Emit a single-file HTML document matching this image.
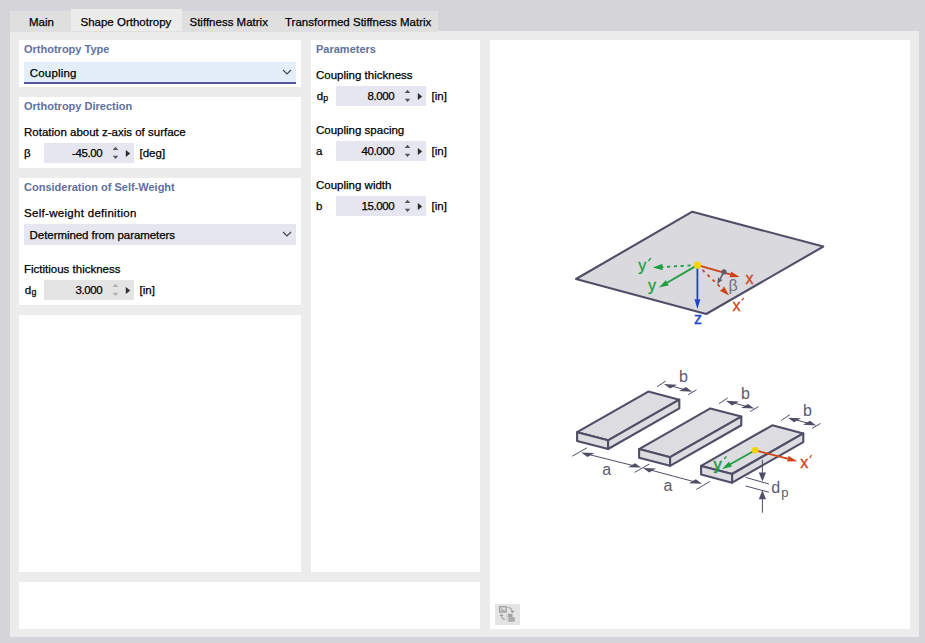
<!DOCTYPE html><html><head><meta charset="utf-8"><style>
html,body{margin:0;padding:0;}
body{width:925px;height:643px;position:relative;overflow:hidden;background:#d5d4d9;font-family:'Liberation Sans',sans-serif;}
div{box-sizing:border-box;}
.t{-webkit-text-stroke:0.25px currentColor;}
.h{-webkit-text-stroke:0.5px currentColor;}
</style></head><body>
<div style="position:absolute;left:10px;top:31px;width:909px;height:606px;background:#ececec;"></div>
<div style="position:absolute;left:10px;top:11px;width:428px;height:21px;background:#dfdfdf;"></div>
<div style="position:absolute;left:71px;top:9px;width:111px;height:22px;background:#ececec;"></div>
<div class="t" style="position:absolute;left:29px;top:14.02px;line-height:16px;font-size:11.5px;font-weight:normal;color:#000000;white-space:pre;">Main</div>
<div class="t" style="position:absolute;left:80.5px;top:14.02px;line-height:16px;font-size:11.5px;font-weight:normal;color:#000000;white-space:pre;">Shape Orthotropy</div>
<div class="t" style="position:absolute;left:189.5px;top:14.02px;line-height:16px;font-size:11.5px;font-weight:normal;color:#000000;white-space:pre;">Stiffness Matrix</div>
<div class="t" style="position:absolute;left:285px;top:14.02px;line-height:16px;font-size:11.5px;font-weight:normal;color:#000000;white-space:pre;">Transformed Stiffness Matrix</div>
<div style="position:absolute;left:19px;top:40px;width:282px;height:47px;background:#ffffff;"></div>
<div style="position:absolute;left:19px;top:97px;width:282px;height:71px;background:#ffffff;"></div>
<div style="position:absolute;left:19px;top:178px;width:282px;height:127px;background:#ffffff;"></div>
<div style="position:absolute;left:19px;top:315px;width:282px;height:257px;background:#ffffff;"></div>
<div style="position:absolute;left:311px;top:40px;width:169px;height:532px;background:#ffffff;"></div>
<div style="position:absolute;left:19px;top:582px;width:461px;height:47px;background:#ffffff;"></div>
<div style="position:absolute;left:490px;top:40px;width:420px;height:589px;background:#ffffff;"></div>
<div style="position:absolute;left:24px;top:41.19px;line-height:16px;font-size:11px;font-weight:bold;color:#6070a0;white-space:pre;">Orthotropy Type</div>
<div style="position:absolute;left:24px;top:62px;width:272px;height:20px;background:#e3eef9;"></div>
<div style="position:absolute;left:24px;top:82px;width:272px;height:2px;background:#5656a0;"></div>
<div class="t" style="position:absolute;left:29.8px;top:65.02px;line-height:16px;font-size:11.5px;font-weight:normal;color:#000000;white-space:pre;letter-spacing:0.18px;">Coupling</div>
<svg style="position:absolute;left:282px;top:69px" width="10" height="6" viewBox="0 0 10 6"><path d="M1 1 L5 5 L9 1" fill="none" stroke="#404040" stroke-width="1.1"/></svg>
<div style="position:absolute;left:24px;top:98.19px;line-height:16px;font-size:11px;font-weight:bold;color:#6070a0;white-space:pre;">Orthotropy Direction</div>
<div class="t" style="position:absolute;left:24px;top:124.02px;line-height:16px;font-size:11.5px;font-weight:normal;color:#000000;white-space:pre;">Rotation about z-axis of surface</div>
<div class="t" style="position:absolute;left:24px;top:145.02px;line-height:16px;font-size:11.5px;font-weight:normal;color:#000000;white-space:pre;">β</div>
<div style="position:absolute;left:44px;top:143px;width:90px;height:20px;background:#e6e6f0;"></div>
<div class="t" style="position:absolute;right:822.8px;top:145.22px;line-height:16px;font-size:11.5px;font-weight:normal;color:#000000;white-space:pre;letter-spacing:-0.42px;">-45.00</div>
<svg style="position:absolute;left:104px;top:143px" width="30" height="20" viewBox="0 0 30 20"><path d="M8.7 7 L11.5 3.8 L14.3 7 Z" fill="#555555"/><path d="M8.7 12.8 L11.5 16 L14.3 12.8 Z" fill="#555555"/><path d="M21.8 7 L26.2 10.5 L21.8 14 Z" fill="#2e2e2e"/></svg>
<div class="t" style="position:absolute;left:139.5px;top:145.22px;line-height:16px;font-size:11.5px;font-weight:normal;color:#000000;white-space:pre;">[deg]</div>
<div style="position:absolute;left:24px;top:179.19px;line-height:16px;font-size:11px;font-weight:bold;color:#6070a0;white-space:pre;">Consideration of Self-Weight</div>
<div class="t" style="position:absolute;left:24px;top:205.02px;line-height:16px;font-size:11.5px;font-weight:normal;color:#000000;white-space:pre;letter-spacing:0.3px;">Self-weight definition</div>
<div style="position:absolute;left:24px;top:224px;width:272px;height:21px;background:#e6e6f0;"></div>
<div class="t" style="position:absolute;left:29.6px;top:227.02px;line-height:16px;font-size:11.5px;font-weight:normal;color:#000000;white-space:pre;letter-spacing:-0.06px;">Determined from parameters</div>
<svg style="position:absolute;left:282px;top:231px" width="10" height="6" viewBox="0 0 10 6"><path d="M1 1 L5 5 L9 1" fill="none" stroke="#404040" stroke-width="1.1"/></svg>
<div class="t" style="position:absolute;left:24px;top:261.02px;line-height:16px;font-size:11.5px;font-weight:normal;color:#000000;white-space:pre;">Fictitious thickness</div>
<div class="t" style="position:absolute;left:24.8px;top:282.02px;line-height:16px;font-size:11.5px;font-weight:normal;color:#000000;white-space:pre;">d</div>
<div class="t" style="position:absolute;left:31.6px;top:284.25px;line-height:16px;font-size:8.8px;font-weight:normal;color:#000000;white-space:pre;">g</div>
<div style="position:absolute;left:44px;top:280px;width:90px;height:20px;background:#e4e4e4;"></div>
<div class="t" style="position:absolute;right:822.8px;top:282.22px;line-height:16px;font-size:11.5px;font-weight:normal;color:#000000;white-space:pre;letter-spacing:-0.42px;">3.000</div>
<svg style="position:absolute;left:104px;top:280px" width="30" height="20" viewBox="0 0 30 20"><path d="M8.7 7 L11.5 3.8 L14.3 7 Z" fill="#b0b0b0"/><path d="M8.7 12.8 L11.5 16 L14.3 12.8 Z" fill="#b0b0b0"/><path d="M21.8 7 L26.2 10.5 L21.8 14 Z" fill="#2e2e2e"/></svg>
<div class="t" style="position:absolute;left:139.5px;top:282.22px;line-height:16px;font-size:11.5px;font-weight:normal;color:#000000;white-space:pre;">[in]</div>
<div style="position:absolute;left:316px;top:41.19px;line-height:16px;font-size:11px;font-weight:bold;color:#6070a0;white-space:pre;">Parameters</div>
<div class="t" style="position:absolute;left:316px;top:67.02px;line-height:16px;font-size:11.5px;font-weight:normal;color:#000000;white-space:pre;">Coupling thickness</div>
<div class="t" style="position:absolute;left:316.8px;top:88.22px;line-height:16px;font-size:11.5px;font-weight:normal;color:#000000;white-space:pre;">d</div>
<div class="t" style="position:absolute;left:323.2px;top:89.75px;line-height:16px;font-size:8.8px;font-weight:normal;color:#000000;white-space:pre;">p</div>
<div style="position:absolute;left:336px;top:86px;width:90px;height:20px;background:#e6e6f0;"></div>
<div class="t" style="position:absolute;right:530.8px;top:88.22px;line-height:16px;font-size:11.5px;font-weight:normal;color:#000000;white-space:pre;letter-spacing:-0.42px;">8.000</div>
<svg style="position:absolute;left:396px;top:86px" width="30" height="20" viewBox="0 0 30 20"><path d="M8.7 7 L11.5 3.8 L14.3 7 Z" fill="#555555"/><path d="M8.7 12.8 L11.5 16 L14.3 12.8 Z" fill="#555555"/><path d="M21.8 7 L26.2 10.5 L21.8 14 Z" fill="#2e2e2e"/></svg>
<div class="t" style="position:absolute;left:431.5px;top:88.22px;line-height:16px;font-size:11.5px;font-weight:normal;color:#000000;white-space:pre;">[in]</div>
<div class="t" style="position:absolute;left:316px;top:121.82px;line-height:16px;font-size:11.5px;font-weight:normal;color:#000000;white-space:pre;">Coupling spacing</div>
<div class="t" style="position:absolute;left:316px;top:143.22px;line-height:16px;font-size:11.5px;font-weight:normal;color:#000000;white-space:pre;">a</div>
<div style="position:absolute;left:336px;top:141px;width:90px;height:20px;background:#e6e6f0;"></div>
<div class="t" style="position:absolute;right:530.8px;top:143.22px;line-height:16px;font-size:11.5px;font-weight:normal;color:#000000;white-space:pre;letter-spacing:-0.42px;">40.000</div>
<svg style="position:absolute;left:396px;top:141px" width="30" height="20" viewBox="0 0 30 20"><path d="M8.7 7 L11.5 3.8 L14.3 7 Z" fill="#555555"/><path d="M8.7 12.8 L11.5 16 L14.3 12.8 Z" fill="#555555"/><path d="M21.8 7 L26.2 10.5 L21.8 14 Z" fill="#2e2e2e"/></svg>
<div class="t" style="position:absolute;left:431.5px;top:143.22px;line-height:16px;font-size:11.5px;font-weight:normal;color:#000000;white-space:pre;">[in]</div>
<div class="t" style="position:absolute;left:316px;top:176.72px;line-height:16px;font-size:11.5px;font-weight:normal;color:#000000;white-space:pre;">Coupling width</div>
<div class="t" style="position:absolute;left:316px;top:198.02px;line-height:16px;font-size:11.5px;font-weight:normal;color:#000000;white-space:pre;">b</div>
<div style="position:absolute;left:336px;top:196px;width:90px;height:20px;background:#e6e6f0;"></div>
<div class="t" style="position:absolute;right:530.8px;top:198.22px;line-height:16px;font-size:11.5px;font-weight:normal;color:#000000;white-space:pre;letter-spacing:-0.42px;">15.000</div>
<svg style="position:absolute;left:396px;top:196px" width="30" height="20" viewBox="0 0 30 20"><path d="M8.7 7 L11.5 3.8 L14.3 7 Z" fill="#555555"/><path d="M8.7 12.8 L11.5 16 L14.3 12.8 Z" fill="#555555"/><path d="M21.8 7 L26.2 10.5 L21.8 14 Z" fill="#2e2e2e"/></svg>
<div class="t" style="position:absolute;left:431.5px;top:198.22px;line-height:16px;font-size:11.5px;font-weight:normal;color:#000000;white-space:pre;">[in]</div>
<div style="position:absolute;left:495px;top:604px;width:25px;height:21px;background:#e4e4e4;"></div>
<svg style="position:absolute;left:495px;top:604px" width="25" height="21" viewBox="0 0 25 21">
<rect x="4.65" y="2.75" width="6.5" height="5.3" fill="none" stroke="#9c9c9c" stroke-width="1.3"/>
<rect x="6.3" y="4.3" width="1.3" height="3.4" fill="#a4a4a4"/><rect x="7.6" y="6.0" width="2.2" height="1.7" fill="#a4a4a4"/>
<path d="M12.6 3.3 Q16.6 3.6 17.2 7.2" fill="none" stroke="#a8a8a8" stroke-width="1.2"/><path d="M15.0 6.7 L19.9 6.9 L17.4 9.1Z" fill="#9c9c9c"/>
<path d="M6.6 11.6 Q6.8 15 9.9 15.4" fill="none" stroke="#a8a8a8" stroke-width="1.2"/><path d="M4.3 12.1 L8.6 12.0 L6.6 9.8Z" fill="#9c9c9c"/>
<path d="M11.4 10.4 L13.1 9.8 L13.1 16.8 L11.4 17.4 Z" fill="#cfcfcf"/>
<path d="M13.1 9.8 L17.5 9.8 L17.5 13.2 L13.1 13.4 Z" fill="#a2a2a2"/>
<path d="M13.6 13.6 L19.8 13.0 L19.8 17.4 L13.6 17.9 Z" fill="#a8a8a8"/>
</svg>
<svg style="position:absolute;left:0;top:0" width="925" height="643" viewBox="0 0 925 643"><polygon points="692.30,211.70 823.30,246.60 706.20,314.00 576.00,279.00" fill="#d9d9de" stroke="#4e4e66" stroke-width="2.1" stroke-linejoin="round"/><line x1="697.40" y1="265.10" x2="661.79" y2="267.02" stroke="#1f9d3f" stroke-width="1.8" stroke-dasharray="3.2,3.6"/><polygon points="652.80,267.50 662.61,263.77 661.99,267.01 662.96,270.16" fill="#1f9d3f"/><line x1="697.40" y1="265.10" x2="666.67" y2="283.06" stroke="#1f9d3f" stroke-width="1.8"/><polygon points="658.90,287.60 666.02,279.96 666.84,282.96 669.05,285.14" fill="#1f9d3f"/><line x1="697.40" y1="265.10" x2="697.40" y2="300.00" stroke="#1d45c4" stroke-width="1.8"/><polygon points="697.40,309.00 694.40,299.00 697.40,299.80 700.40,299.00" fill="#1d45c4"/><line x1="697.40" y1="265.10" x2="731.04" y2="274.56" stroke="#cf4216" stroke-width="1.8"/><polygon points="739.70,277.00 729.26,277.18 730.84,274.51 730.89,271.40" fill="#cf4216"/><line x1="697.40" y1="265.10" x2="722.59" y2="289.18" stroke="#cf4216" stroke-width="1.8" stroke-dasharray="3,4"/><polygon points="729.10,295.40 719.80,290.66 722.45,289.04 723.94,286.32" fill="#cf4216"/><circle cx="697.4" cy="265.1" r="3.6" fill="#f5d500"/><line x1="723.80" y1="272.00" x2="719.89" y2="279.35" stroke="#5c5c6c" stroke-width="1.6"/><polygon points="717.30,284.20 718.06,277.24 719.98,279.17 722.65,279.69" fill="#5c5c6c"/><circle cx="724" cy="271.9" r="2.6" fill="#5c5c6c"/><text x="642.20" y="270.80" font-size="16" fill="#1f9d3f" stroke="#1f9d3f" stroke-width="0.3" font-family="Liberation Sans" text-anchor="middle">y</text><line x1="648.3" y1="261.2" x2="650.9" y2="258.0" stroke="#1f9d3f" stroke-width="1.2"/><text x="652.00" y="290.80" font-size="16" fill="#1f9d3f" stroke="#1f9d3f" stroke-width="0.3" font-family="Liberation Sans" text-anchor="middle">y</text><text x="698.00" y="324.00" font-size="16" fill="#1d45c4" stroke="#1d45c4" stroke-width="0.3" font-family="Liberation Sans" text-anchor="middle">z</text><text x="749.60" y="284.00" font-size="16" fill="#cf4216" stroke="#cf4216" stroke-width="0.3" font-family="Liberation Sans" text-anchor="middle">x</text><text x="736.50" y="310.50" font-size="16" fill="#cf4216" stroke="#cf4216" stroke-width="0.3" font-family="Liberation Sans" text-anchor="middle">x</text><line x1="741.8" y1="300.4" x2="744" y2="297.8" stroke="#cf4216" stroke-width="1.2"/><text x="733.00" y="291.00" font-size="16" fill="#70707e" stroke="#70707e" stroke-width="0" font-family="Liberation Sans" text-anchor="middle">β</text><polygon points="577.10,432.20 608.10,440.30 679.30,399.70 648.30,391.60" fill="#dcdce1" stroke="#4e4e66" stroke-width="2.1" stroke-linejoin="round"/><polygon points="577.10,432.20 608.10,440.30 608.10,449.00 577.10,440.90" fill="#dcdce1" stroke="#4e4e66" stroke-width="2.1" stroke-linejoin="round"/><polygon points="608.10,440.30 679.30,399.70 679.30,408.40 608.10,449.00" fill="#dcdce1" stroke="#4e4e66" stroke-width="2.1" stroke-linejoin="round"/><line x1="657.10" y1="386.80" x2="665.80" y2="381.05" stroke="#4e4e66" stroke-width="1"/><line x1="688.10" y1="394.70" x2="696.50" y2="389.80" stroke="#4e4e66" stroke-width="1"/><line x1="678.05" y1="387.85" x2="672.58" y2="386.36" stroke="#4e4e66" stroke-width="1"/><polygon points="663.90,384.00 677.02,384.64 673.55,386.63 670.07,388.61" fill="#4e4e66"/><line x1="678.05" y1="387.85" x2="683.52" y2="389.34" stroke="#4e4e66" stroke-width="1"/><polygon points="692.20,391.70 686.03,387.09 682.55,389.07 679.08,391.06" fill="#4e4e66"/><text x="683.40" y="382.00" font-size="16" fill="#5a5a6e" stroke="#5a5a6e" stroke-width="0" font-family="Liberation Sans" text-anchor="middle">b</text><polygon points="639.10,449.05 670.10,457.15 741.30,416.55 710.30,408.45" fill="#dcdce1" stroke="#4e4e66" stroke-width="2.1" stroke-linejoin="round"/><polygon points="639.10,449.05 670.10,457.15 670.10,465.85 639.10,457.75" fill="#dcdce1" stroke="#4e4e66" stroke-width="2.1" stroke-linejoin="round"/><polygon points="670.10,457.15 741.30,416.55 741.30,425.25 670.10,465.85" fill="#dcdce1" stroke="#4e4e66" stroke-width="2.1" stroke-linejoin="round"/><line x1="719.10" y1="403.65" x2="727.80" y2="397.90" stroke="#4e4e66" stroke-width="1"/><line x1="750.10" y1="411.55" x2="758.50" y2="406.65" stroke="#4e4e66" stroke-width="1"/><line x1="740.05" y1="404.70" x2="734.58" y2="403.21" stroke="#4e4e66" stroke-width="1"/><polygon points="725.90,400.85 739.02,401.49 735.55,403.48 732.07,405.46" fill="#4e4e66"/><line x1="740.05" y1="404.70" x2="745.52" y2="406.19" stroke="#4e4e66" stroke-width="1"/><polygon points="754.20,408.55 748.03,403.94 744.55,405.92 741.08,407.91" fill="#4e4e66"/><text x="745.40" y="398.85" font-size="16" fill="#5a5a6e" stroke="#5a5a6e" stroke-width="0" font-family="Liberation Sans" text-anchor="middle">b</text><polygon points="701.10,465.90 732.10,474.00 803.30,433.40 772.30,425.30" fill="#dcdce1" stroke="#4e4e66" stroke-width="2.1" stroke-linejoin="round"/><polygon points="701.10,465.90 732.10,474.00 732.10,482.70 701.10,474.60" fill="#dcdce1" stroke="#4e4e66" stroke-width="2.1" stroke-linejoin="round"/><polygon points="732.10,474.00 803.30,433.40 803.30,442.10 732.10,482.70" fill="#dcdce1" stroke="#4e4e66" stroke-width="2.1" stroke-linejoin="round"/><line x1="781.10" y1="420.50" x2="789.80" y2="414.75" stroke="#4e4e66" stroke-width="1"/><line x1="812.10" y1="428.40" x2="820.50" y2="423.50" stroke="#4e4e66" stroke-width="1"/><line x1="802.05" y1="421.55" x2="796.58" y2="420.06" stroke="#4e4e66" stroke-width="1"/><polygon points="787.90,417.70 801.02,418.34 797.55,420.33 794.07,422.31" fill="#4e4e66"/><line x1="802.05" y1="421.55" x2="807.52" y2="423.04" stroke="#4e4e66" stroke-width="1"/><polygon points="816.20,425.40 810.03,420.79 806.55,422.77 803.08,424.76" fill="#4e4e66"/><text x="807.40" y="415.70" font-size="16" fill="#5a5a6e" stroke="#5a5a6e" stroke-width="0" font-family="Liberation Sans" text-anchor="middle">b</text><line x1="572.3" y1="456.2" x2="586.9" y2="447.8" stroke="#4e4e66" stroke-width="1"/><line x1="634.7" y1="472.4" x2="649.3" y2="464" stroke="#4e4e66" stroke-width="1"/><line x1="696.3" y1="489.5" x2="710.1" y2="481.3" stroke="#4e4e66" stroke-width="1"/><line x1="611.20" y1="460.10" x2="589.93" y2="454.78" stroke="#4e4e66" stroke-width="1"/><polygon points="581.20,452.60 594.38,453.04 590.90,455.03 587.43,457.01" fill="#4e4e66"/><line x1="611.20" y1="460.10" x2="632.47" y2="465.42" stroke="#4e4e66" stroke-width="1"/><polygon points="641.20,467.60 634.97,463.19 631.50,465.17 628.02,467.16" fill="#4e4e66"/><text x="606.80" y="475.00" font-size="16" fill="#5a5a6e" stroke="#5a5a6e" stroke-width="0" font-family="Liberation Sans" text-anchor="middle">a</text><line x1="672.50" y1="475.90" x2="651.69" y2="470.33" stroke="#4e4e66" stroke-width="1"/><polygon points="643.00,468.00 656.13,468.61 652.66,470.59 649.18,472.57" fill="#4e4e66"/><line x1="672.50" y1="475.90" x2="693.31" y2="481.47" stroke="#4e4e66" stroke-width="1"/><polygon points="702.00,483.80 695.82,479.23 692.34,481.21 688.87,483.19" fill="#4e4e66"/><text x="668.00" y="491.00" font-size="16" fill="#5a5a6e" stroke="#5a5a6e" stroke-width="0" font-family="Liberation Sans" text-anchor="middle">a</text><line x1="745.6" y1="477.4" x2="768.9" y2="484" stroke="#4e4e66" stroke-width="1"/><line x1="745.6" y1="486" x2="768.9" y2="492.2" stroke="#4e4e66" stroke-width="1"/><line x1="762.40" y1="459.80" x2="762.40" y2="473.60" stroke="#4e4e66" stroke-width="1"/><polygon points="762.40,481.60 758.80,472.60 762.40,472.60 766.00,472.60" fill="#4e4e66"/><line x1="762.40" y1="512.70" x2="762.40" y2="498.30" stroke="#4e4e66" stroke-width="1"/><polygon points="762.40,490.30 766.00,499.30 762.40,499.30 758.80,499.30" fill="#4e4e66"/><text x="771.3" y="493.2" font-size="16" fill="#5a5a6e" font-family="Liberation Sans">d</text><text x="781.2" y="496.6" font-size="13" fill="#5a5a6e" font-family="Liberation Sans">p</text><line x1="755.10" y1="450.30" x2="788.49" y2="458.94" stroke="#cf4216" stroke-width="1.8"/><polygon points="797.20,461.20 786.77,461.60 788.29,458.89 788.27,455.79" fill="#cf4216"/><line x1="755.10" y1="450.30" x2="729.85" y2="464.49" stroke="#1f9d3f" stroke-width="1.8"/><polygon points="722.00,468.90 729.25,461.39 730.02,464.39 732.19,466.62" fill="#1f9d3f"/><circle cx="755.1" cy="450.3" r="3.3" fill="#f3d400"/><text x="804.30" y="468.00" font-size="16" fill="#cf4216" stroke="#cf4216" stroke-width="0.3" font-family="Liberation Sans" text-anchor="middle">x</text><line x1="809.6" y1="457.8" x2="811.6" y2="455.2" stroke="#cf4216" stroke-width="1.2"/><text x="717.6" y="469.5" font-size="16.5" fill="#1f9d3f" stroke="#1f9d3f" stroke-width="0.5" font-family="Liberation Sans" text-anchor="middle">y</text><line x1="724.2" y1="459" x2="726.4" y2="456.4" stroke="#1f9d3f" stroke-width="1.4"/></svg>
</body></html>
